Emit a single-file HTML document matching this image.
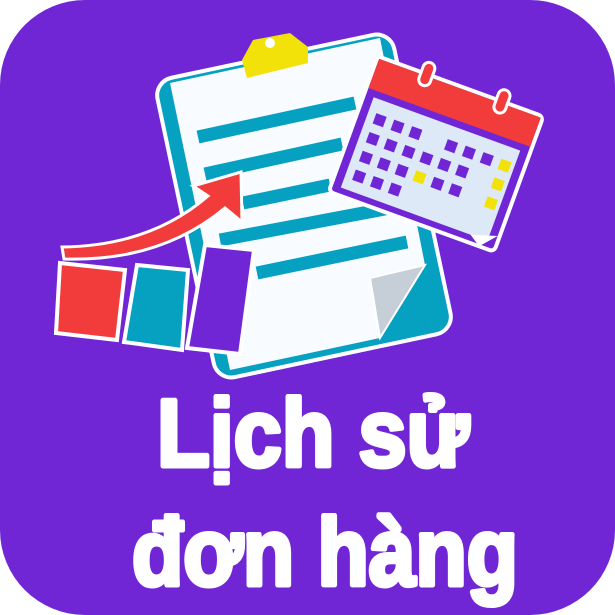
<!DOCTYPE html>
<html><head><meta charset="utf-8"><style>
html,body{margin:0;padding:0;background:#fff;}
svg{display:block}
</style></head><body>
<svg width="615" height="615" viewBox="0 0 615 615" xmlns="http://www.w3.org/2000/svg">
<rect x="0" y="0" width="615" height="615" rx="85" fill="#7126d6"/>
<g transform="translate(304,206) rotate(-12)">
<rect x="-121" y="-153" width="242" height="306" rx="18" fill="#06a0c0" stroke="#fff" stroke-width="4"/>
</g>
<polygon points="170,83 380,38 425,265 380,338 230,370" fill="#f8fbff"/>
<polygon points="370,278 425,265 380,338" fill="#c6cfd8" stroke="#fff" stroke-width="2"/>
<polygon points="242,60 253,40 290,33 308,47 308,63 247,78" fill="#f2e20a"/>
<circle cx="270" cy="43" r="5" fill="#fff"/>
<g stroke="#06a0c0" stroke-width="13">
<line x1="198" y1="137" x2="355" y2="103"/>
<line x1="205" y1="174" x2="342" y2="144"/>
<line x1="243" y1="203" x2="330" y2="185"/>
<line x1="220" y1="240" x2="390" y2="208"/>
<line x1="257" y1="273" x2="407" y2="242"/>
</g>
<g transform="translate(436,154) rotate(20)">
<rect x="-88" y="-72" width="176" height="144" rx="5" fill="#7126d6" stroke="#fff" stroke-width="4"/>
<rect x="-86" y="-70" width="172" height="31" fill="#f23c3c"/>
<rect x="-78" y="-32" width="156" height="96" fill="#dde9f7"/>
<g fill="#7126d6">
<rect x="-70" y="-18" width="11" height="11"/><rect x="-51" y="-18" width="11" height="11"/><rect x="-32" y="-18" width="11" height="11"/><rect x="6" y="-18" width="11" height="11"/><rect x="25" y="-18" width="11" height="11"/><rect x="44" y="-18" width="11" height="11"/>
<rect x="-70" y="2" width="11" height="11"/><rect x="-51" y="2" width="11" height="11"/><rect x="-32" y="2" width="11" height="11"/><rect x="-13" y="2" width="11" height="11"/><rect x="6" y="2" width="11" height="11"/><rect x="25" y="2" width="11" height="11"/>
<rect x="-70" y="22" width="11" height="11"/><rect x="-51" y="22" width="11" height="11"/><rect x="-32" y="22" width="11" height="11"/><rect x="6" y="22" width="11" height="11"/><rect x="25" y="22" width="11" height="11"/>
<rect x="-70" y="42" width="11" height="11"/><rect x="-51" y="42" width="11" height="11"/><rect x="-32" y="42" width="11" height="11"/>
</g>
<g fill="#f2e20a">
<rect x="63" y="-18" width="11" height="11"/><rect x="63" y="2" width="11" height="11"/><rect x="-13" y="22" width="11" height="11"/><rect x="63" y="22" width="11" height="11"/>
</g>
<polygon points="60,64 86,56 72,72" fill="#fff"/>
<rect x="-42" y="-84" width="12" height="24" rx="6" fill="#f23c3c" stroke="#fff" stroke-width="3"/>
<rect x="38" y="-84" width="12" height="24" rx="6" fill="#f23c3c" stroke="#fff" stroke-width="3"/>
</g>
<path d="M62,247 Q150,246 208,196 L193,186 L241,172 L242,222 L225,208 Q160,262 64,259 Z" fill="#f23c3c" stroke="#fff" stroke-width="3"/>
<polygon points="60,263 125,270 117,340 56,333" fill="#f23c3c" stroke="#fff" stroke-width="4"/>
<polygon points="137,265 188,270 182,350 124,342" fill="#06a0c0" stroke="#fff" stroke-width="4"/>
<polygon points="205,245 254,250 240,354 187,348" fill="#7126d6" stroke="#fff" stroke-width="4"/>
<g font-family="'Liberation Sans','DejaVu Sans',sans-serif" font-weight="bold" fill="#fff" stroke="#fff" stroke-width="5" stroke-linejoin="round" font-size="96">
<text x="157" y="466" textLength="312" lengthAdjust="spacingAndGlyphs">Lịch sử</text>
<text x="132" y="585" textLength="386" lengthAdjust="spacingAndGlyphs">đơn hàng</text>
</g>
</svg>
</body></html>
